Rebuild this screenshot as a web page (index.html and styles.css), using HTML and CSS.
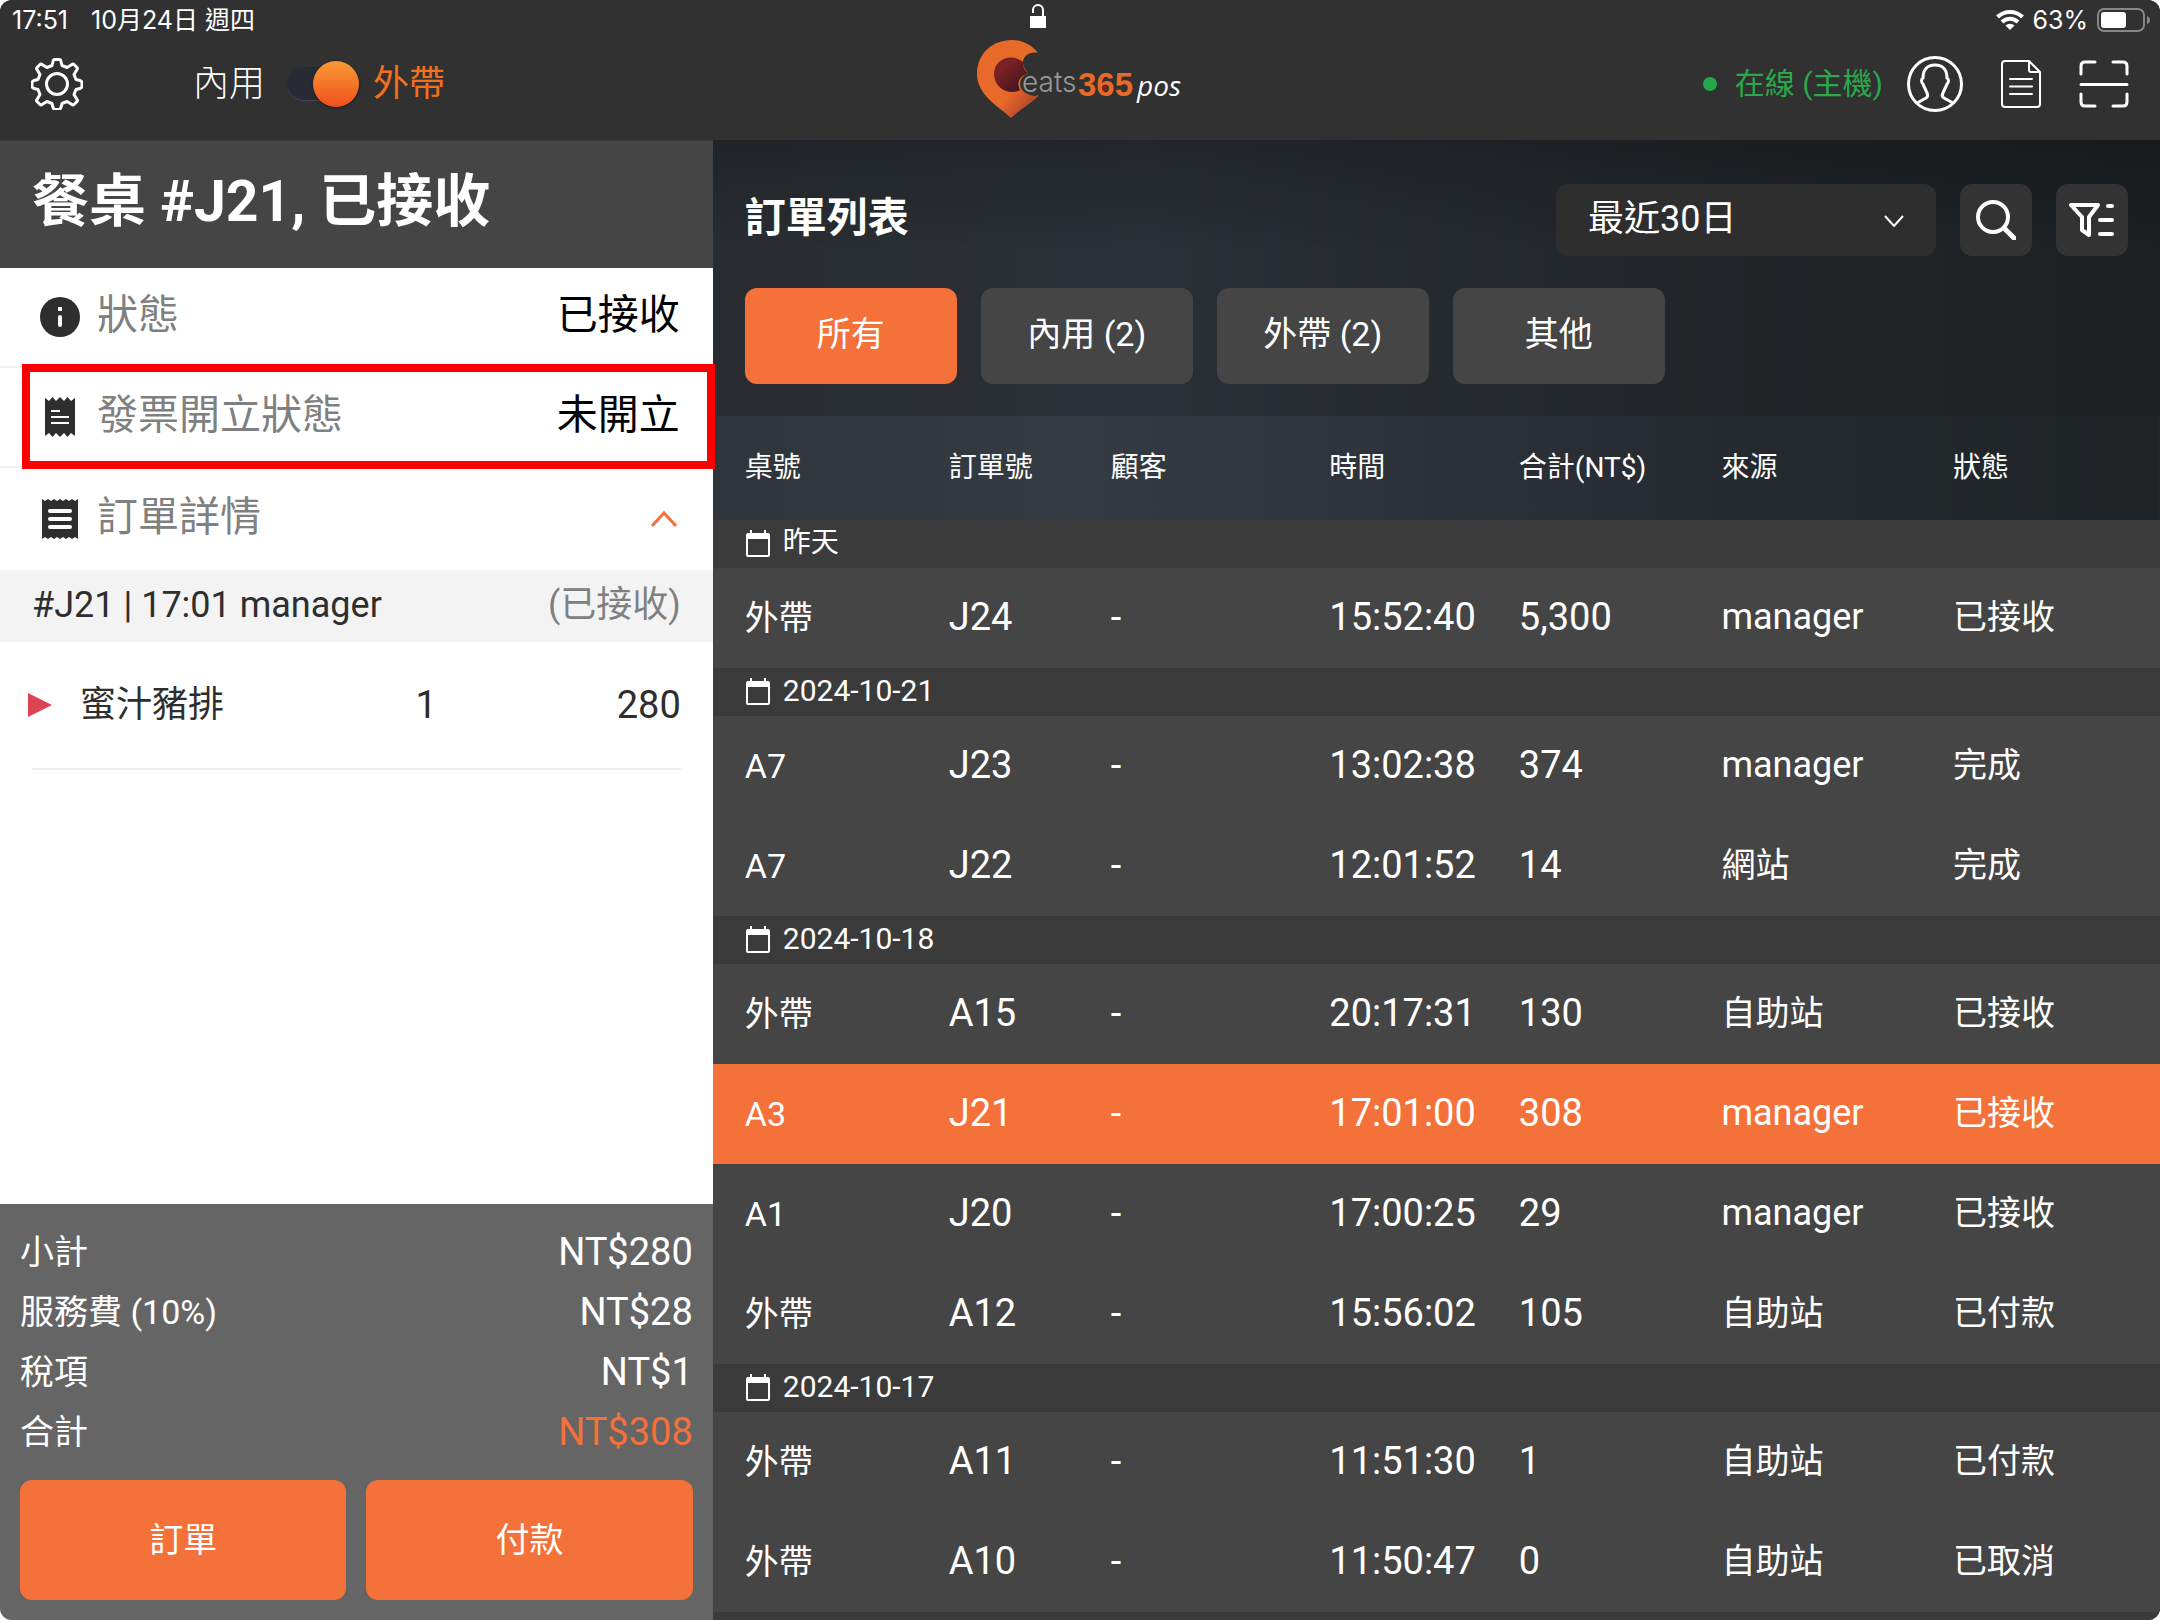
FILE: index.html
```html
<!DOCTYPE html>
<html lang="zh-Hant">
<head>
<meta charset="utf-8">
<meta name="viewport" content="width=device-width, initial-scale=1">
<title>Eats365 POS 訂單列表</title>
<link rel="stylesheet" href="styles.css">
</head>
<body>
<svg class="sprite" aria-hidden="true">
  <symbol id="calendar" viewBox="0 0 26 28">
    <path fill="#fff" fill-rule="evenodd" d="M5 0h2v3h12V0h2v3h2q2 0 2 2v20q0 2-2 2H3q-2 0-2-2V5q0-2 2-2h2zM3 9v16h20V9z"/>
  </symbol>
</svg>
<div class="app">
  <header class="topbar">
    <div class="statusbar">
      <div class="clock"><span>17:51</span><span>10月24日 週四</span></div>
      <svg class="lock" width="16" height="24" viewBox="0 0 16 24"><path d="M0 12h16v12H0z" fill="#fff"/><path d="M3 9V6a5 5 0 0 1 10 0v7" fill="none" stroke="#fff" stroke-width="2"/></svg>
      <div class="device">
        <svg width="28" height="22" viewBox="0 0 28 22" fill="none" stroke="#fff" stroke-width="4"><path d="M1.500 8a18 18 0 0 1 25 0"/><path d="M6 13a11.500 11.500 0 0 1 16 0"/><path d="M14 21l-4.500-4.500a6.500 6.500 0 0 1 9 0z" fill="#fff" stroke="none"/></svg>
        <span>63%</span>
        <svg width="53" height="24" viewBox="0 0 53 24"><rect x="1" y="1" width="46" height="22" rx="6" fill="none" stroke="#868686" stroke-width="2"/><rect x="4" y="4" width="25" height="16" rx="3" fill="#fff"/><path d="M50 8q3 1 3 4t-3 4z" fill="#868686"/></svg>
      </div>
    </div>
    <div class="toolbar">
      <div class="tools-left">
        <button class="icon-btn" aria-label="設定">
          <svg width="52" height="52" viewBox="0 0 52 52" fill="none" stroke="#fff" stroke-width="3" stroke-linejoin="round"><circle cx="26" cy="26" r="10.500"/><path d="M23.500 1.500h5q1 0 1.500 2l1 4 5 2 5-3q1-1 2 0l3 3q1 1 0 2l-3 5 2 5 4 1q2 1 2 2v4q0 1-2 2l-4 1-2 5 3 5q1 1 0 2l-3 3q-1 1-2 0l-5-3-5 2-1 4q-1 2-2 2h-4q-1 0-2-2l-1-4-5-2-5 3q-1 1-2 0l-3-3q-1-1 0-2l3-5-2-5-4-1q-2-1-2-2v-4q0-1 2-2l4-1 2-5-3-5q-1-1 0-2l3-3q1-1 2 0l5 3 5-2 1-4q.5-2 1.500-2z"/></svg>
        </button>
        <label class="mode">
          <span>內用</span>
          <input type="checkbox" class="switch" checked>
          <span class="mode-on">外帶</span>
        </label>
      </div>
      <svg class="logo" width="206" height="80" viewBox="0 0 206 80">
        <defs>
          <linearGradient id="pin" x1="0" y1="0" x2="1" y2="1"><stop offset=".6" stop-color="#e86a28"/><stop offset="1" stop-color="#93302b"/></linearGradient>
          <linearGradient id="core" x1="0" y1="0" x2="1" y2="1"><stop offset=".3" stop-color="#7b2123"/><stop offset=".8" stop-color="#451722"/></linearGradient>
        </defs>
        <path fill="url(#pin)" d="M34 78C24 68 0 56 0 34 0 14 15 0 35 0c11 0 20 5 26 13-9-2-16 4-15 11 1 4 3 7 5 9-10 4-13 20 6 23l5-1C57 62 43 69 34 78z"/>
        <path fill="url(#core)" d="M46 22c-13-10-29-2-29 12s15 22 26 16c-4-8 0-14 8-17-3-2-5-6-5-11z"/>
        <text x="45" y="52" class="logo-eats">eats</text>
        <text x="101" y="56" class="logo-365">365</text>
        <circle cx="128" cy="48" r="3" fill="#7b2123"/>
        <text x="160" y="56" class="logo-pos">pos</text>
      </svg>
      <div class="tools-right">
        <span class="online">在線 (主機)</span>
        <button class="icon-btn" aria-label="帳戶">
          <svg width="56" height="56" viewBox="0 0 56 56" fill="none" stroke="#fff" stroke-width="3"><circle cx="28" cy="28" r="26.500"/><path d="M10 47l9-5c2-1 2-3 1-5-1-3-3-6-4-9-2-2-2-5 0-6 0-8 4-13 12-13s12 5 12 13c2 1 2 4 0 6-1 3-3 6-4 9-1 2-1 4 1 5l9 5"/></svg>
        </button>
        <button class="icon-btn" aria-label="單據">
          <svg width="40" height="48" viewBox="0 0 40 48" fill="none" stroke="#fff" stroke-width="2" stroke-linejoin="round"><path d="M4 1h24l11 11v32q0 3-3 3H4q-3 0-3-3V4q0-3 3-3zM28 1v9q0 2 2 2h9"/><path d="M9 19h22M9 26.500h22M9 34h22" stroke-linecap="round"/></svg>
        </button>
        <button class="icon-btn" aria-label="掃描">
          <svg width="50" height="48" viewBox="0 0 50 48" fill="none" stroke="#fff" stroke-width="3" stroke-linecap="round"><path d="M2 14V6q0-4 4-4h10M34 2h10q4 0 4 4v8M48 34v8q0 4-4 4H34M16 46H6q-4 0-4-4v-8M2 24.500h46"/></svg>
        </button>
      </div>
    </div>
  </header>

  <main class="content">
    <section class="ticket">
      <h1 class="ticket-title">餐桌 #J21, 已接收</h1>
      <div class="info-row">
        <svg width="40" height="40" viewBox="0 0 40 40"><circle cx="20" cy="20" r="20" fill="#2e2e2e"/><path d="M18 10h4v4h-4z" fill="#fff"/><path d="M20 20v8" stroke="#fff" stroke-width="4" stroke-linecap="round"/></svg>
        <span class="info-label">狀態</span><span class="info-value">已接收</span>
      </div>
      <div class="info-row marked">
        <svg width="40" height="40" viewBox="0 0 40 40"><path fill="#2e2e2e" d="M5 1l4 3 3.500-4 3.500 4 4-4 4 4 3.500-4 3.500 4 4-3v38l-4-3-3.500 4-3.500-4-4 4-4-4-3.500 4L9 36l-4 3z"/><path d="M11 14h9M11 20h18M11 26h18" stroke="#fff" stroke-width="2"/></svg>
        <span class="info-label">發票開立狀態</span><span class="info-value">未開立</span>
      </div>
      <div class="info-row">
        <svg width="40" height="40" viewBox="0 0 40 40"><path fill="#2e2e2e" d="M2 0l3 2 3-2 3 2 3-2 3 2 3-2 3 2 3-2 3 2 3-2 3 2 3-2v40l-3-2-3 2-3-2-3 2-3-2-3 2-3-2-3 2-3-2-3 2-3-2-3 2z"/><path d="M10 12h20M10 20h20M10 28h20" stroke="#fff" stroke-width="4" stroke-linecap="round"/></svg>
        <span class="info-label">訂單詳情</span>
        <button class="icon-btn" aria-label="收合"><svg width="26" height="16" viewBox="0 0 26 16" fill="none" stroke="#f4713a" stroke-width="3"><path d="M1 15L13 2l12 13"/></svg></button>
      </div>
      <div class="batch"><span>#J21 | 17:01 manager</span><span class="muted">(已接收)</span></div>
      <div class="item">
        <svg width="24" height="24" viewBox="0 0 24 24"><path d="M0 0l24 12L0 24z" fill="#dc4455"/></svg>
        <span>蜜汁豬排</span><span class="qty">1</span><span class="price">280</span>
      </div>
      <div class="totals">
        <dl class="total-list">
          <div><dt>小計</dt><dd>NT$280</dd></div>
          <div><dt>服務費 (10%)</dt><dd>NT$28</dd></div>
          <div><dt>稅項</dt><dd>NT$1</dd></div>
          <div><dt>合計</dt><dd class="accent">NT$308</dd></div>
        </dl>
        <div class="actions"><button>訂單</button><button>付款</button></div>
      </div>
    </section>

    <section class="orders">
      <div class="orders-head">
        <div class="orders-bar">
          <h2>訂單列表</h2>
          <div class="select-wrap">
            <select aria-label="期間"><option>最近30日</option></select>
            <svg class="caret" width="20" height="12" viewBox="0 0 20 12" fill="none" stroke="#fff" stroke-width="2"><path d="M1 1l9 10 9-10"/></svg>
          </div>
          <button class="square" aria-label="搜尋"><svg width="40" height="40" viewBox="0 0 40 40" fill="none" stroke="#fff" stroke-width="4"><circle cx="17" cy="17" r="15"/><path d="M28 28l10 10" stroke-width="5" stroke-linecap="round"/></svg></button>
          <button class="square" aria-label="篩選"><svg width="46" height="36" viewBox="0 0 46 36" fill="none" stroke="#fff" stroke-width="4" stroke-linejoin="round" stroke-linecap="round"><path d="M2 3h27l-9 12v18l-7-5V15z"/><path d="M39 4h4M31 18h12M31 32h12"/></svg></button>
        </div>
        <div class="tabs">
          <button class="active">所有</button><button>內用 (2)</button><button>外帶 (2)</button><button>其他</button>
        </div>
      </div>
      <table>
        <colgroup><col class="c1"><col class="c2"><col class="c3"><col class="c4"><col class="c5"><col class="c6"><col class="c7"></colgroup>
        <thead><tr><th>桌號</th><th>訂單號</th><th>顧客</th><th>時間</th><th>合計(NT$)</th><th>來源</th><th>狀態</th></tr></thead>
        <tbody>
          <tr class="day"><th colspan="7"><div><svg width="26" height="28"><use href="#calendar"/></svg><span>昨天</span></div></th></tr>
          <tr><td>外帶</td><td class="num">J24</td><td class="num">-</td><td class="num">15:52:40</td><td class="num">5,300</td><td class="latin">manager</td><td>已接收</td></tr>
          <tr class="day"><th colspan="7"><div><svg width="26" height="28"><use href="#calendar"/></svg><span class="date">2024-10-21</span></div></th></tr>
          <tr><td>A7</td><td class="num">J23</td><td class="num">-</td><td class="num">13:02:38</td><td class="num">374</td><td class="latin">manager</td><td>完成</td></tr>
          <tr><td>A7</td><td class="num">J22</td><td class="num">-</td><td class="num">12:01:52</td><td class="num">14</td><td>網站</td><td>完成</td></tr>
          <tr class="day"><th colspan="7"><div><svg width="26" height="28"><use href="#calendar"/></svg><span class="date">2024-10-18</span></div></th></tr>
          <tr><td>外帶</td><td class="num">A15</td><td class="num">-</td><td class="num">20:17:31</td><td class="num">130</td><td>自助站</td><td>已接收</td></tr>
          <tr class="selected"><td>A3</td><td class="num">J21</td><td class="num">-</td><td class="num">17:01:00</td><td class="num">308</td><td class="latin">manager</td><td>已接收</td></tr>
          <tr><td>A1</td><td class="num">J20</td><td class="num">-</td><td class="num">17:00:25</td><td class="num">29</td><td class="latin">manager</td><td>已接收</td></tr>
          <tr><td>外帶</td><td class="num">A12</td><td class="num">-</td><td class="num">15:56:02</td><td class="num">105</td><td>自助站</td><td>已付款</td></tr>
          <tr class="day"><th colspan="7"><div><svg width="26" height="28"><use href="#calendar"/></svg><span class="date">2024-10-17</span></div></th></tr>
          <tr><td>外帶</td><td class="num">A11</td><td class="num">-</td><td class="num">11:51:30</td><td class="num">1</td><td>自助站</td><td>已付款</td></tr>
          <tr><td>外帶</td><td class="num">A10</td><td class="num">-</td><td class="num">11:50:47</td><td class="num">0</td><td>自助站</td><td>已取消</td></tr>
        </tbody>
      </table>
    </section>
  </main>
</div>
</body>
</html>
```
FILE: styles.css
```css
:root {
  --orange: #f4713a;
  --bar: #313131;
  --row: #454545;
  --day: #3b3b3b;
}
* { box-sizing: border-box; }
body {
  margin: 0;
  background: #fff;
  color: #fff;
  font: 400 34px/48px "Roboto", "Noto Sans CJK TC", sans-serif;
}
button, select, input { font: inherit; color: inherit; margin: 0; }
button { border: 0; padding: 0; background: none; cursor: pointer; }
svg { display: block; flex: none; }
.sprite { position: absolute; width: 0; height: 0; }

.app {
  display: flex;
  flex-direction: column;
  height: 100vh;
  overflow: hidden;
  border-radius: 12px;
  background: var(--day);
}

/* top bar */
.topbar { flex: none; background: var(--bar); }
.statusbar {
  display: grid;
  grid-template-columns: 1fr auto 1fr;
  height: 28px;
  padding: 0 10px 0 12px;
  font: 400 25px/40px "Inter", "Noto Sans CJK TC", sans-serif;
}
.clock { display: flex; gap: 23px; }
.lock { margin: 4px 86px 0 0; }
.device { display: flex; justify-content: flex-end; align-items: center; gap: 9px; height: 40px; }
.toolbar {
  display: grid;
  grid-template-columns: 1fr auto 1fr;
  align-items: center;
  height: 112px;
  padding: 0 31px;
}
.tools-left, .tools-right, .mode { display: flex; align-items: center; }
.mode { gap: 22px; margin-left: 110px; font-size: 36px; font-weight: 300; }
.mode-on { color: #f26f1c; margin-left: -8px; font-weight: 400; }
.switch {
  appearance: none;
  display: flex;
  align-items: center;
  justify-content: flex-end;
  width: 72px;
  height: 34px;
  border-radius: 17px;
  background: #282b35;
  border-bottom: 1px solid #464b55;
}
.switch::before {
  content: "";
  flex: none;
  width: 46px;
  height: 46px;
  border-radius: 50%;
  background: linear-gradient(#f99a35, #f0501b);
  box-shadow: 0 1px 3px #0008;
}
.logo { margin-bottom: 8px; }
.logo-eats { font: 300 28px "Inter", sans-serif; fill: #999; }
.logo-365 { font: bold 33px "Liberation Sans", sans-serif; fill: #e86a28; }
.logo-pos { font: italic 400 28px "Open Sans", sans-serif; fill: #fff; }
.tools-right { justify-content: flex-end; font-size: 30px; }
.tools-right .icon-btn { margin-left: 38px; }
.online { display: flex; align-items: center; gap: 18px; color: #2aa84c; }
.online::before { content: ""; width: 14px; height: 14px; border-radius: 50%; background: #24a84a; }
.online + .icon-btn { margin-left: 24px; }

.content { display: grid; grid-template-columns: 33% 1fr; flex: 1; min-height: 0; }

/* ticket */
.ticket { display: flex; flex-direction: column; min-height: 0; background: #fff; color: #2e2e2e; }
.ticket-title {
  margin: 0;
  height: 128px;
  padding: 0 32px;
  border-top: 1px solid #3b3b3b;
  background: var(--row);
  color: #fff;
  font-size: 57px;
  font-weight: 700;
  line-height: 122px;
}
.info-row {
  position: relative;
  display: flex;
  align-items: center;
  gap: 17px;
  height: 100px;
  padding: 0 33px 0 40px;
  border-bottom: 2px solid #f0f0f2;
  font-size: 41px;
}
.info-row:nth-of-type(3) { height: 102px; border: 0; }
.info-row span { padding-bottom: 4px; }
.info-row .icon-btn { margin-right: 3px; }
.info-label { flex: 1; color: #808080; }
.info-value { color: #000; }
.marked::after {
  content: "";
  position: absolute;
  inset: -4px -2px -3px 22px;
  border: 8px solid #f00;
}
.batch { display: flex; justify-content: space-between; height: 72px; padding: 0 32px; background: #f3f3f3; font-size: 36px; line-height: 70px; }
.muted { color: #808080; }
.item {
  display: grid;
  grid-template-columns: 20px 1fr auto 246px;
  align-items: center;
  column-gap: 28px;
  height: 128px;
  margin: 0 32px;
  border-bottom: 2px solid #ededf2;
  font-size: 36px;
}
.item { grid-template-columns: 20px 1fr auto 216px; }
.item svg { margin-left: -4px; }
.qty, .price { font-size: 38px; }
.price { text-align: right; }
.totals { margin-top: auto; padding: 18px 20px 20px; background: #656565; color: #fff; }
.total-list { margin: 0 0 18px; }
.total-list div { display: flex; justify-content: space-between; line-height: 60px; }
.total-list dd { margin: 0; font-size: 38px; }
.total-list .accent { color: var(--orange); }
.actions { display: grid; grid-template-columns: 1fr 1fr; gap: 20px; }
.actions button { height: 120px; border-radius: 12px; background: var(--orange); }

/* orders */
.orders { min-width: 0; overflow: hidden; background: var(--day); }
.orders-head {
  height: 276px;
  padding: 44px 32px 0;
  background: linear-gradient(#0003, #0000 40%), linear-gradient(90deg, #292d31, #2b3036 30%, #23272b 62%, #1d2022);
}
.orders-bar { display: flex; align-items: center; gap: 24px; }
.orders-bar h2 { flex: 1; margin: 0; padding-bottom: 4px; font-size: 41px; font-weight: 700; line-height: 64px; }
.select-wrap { position: relative; width: 380px; }
.select-wrap select { appearance: none; width: 100%; height: 72px; padding: 0 32px 2px; border: 0; border-radius: 12px; background: #2e2e2e; font-size: 36px; }
.caret { position: absolute; right: 32px; top: 31px; pointer-events: none; }
.square { display: grid; place-items: center; width: 72px; height: 72px; border-radius: 12px; background: #333; }
.tabs { display: flex; gap: 24px; margin-top: 32px; }
.tabs button { width: 212px; height: 96px; padding-bottom: 4px; border-radius: 12px; background: var(--row); }
.tabs .active { background: var(--orange); }

table { width: 100%; table-layout: fixed; border-collapse: collapse; }
.c1 { width: 16.3%; }
.c2 { width: 11.2%; }
.c3 { width: 15.1%; }
.c4 { width: 13.1%; }
.c5 { width: 14%; }
.c6 { width: 16%; }
th, td { padding: 0; text-align: left; font-weight: inherit; white-space: nowrap; }
th:first-child, td:first-child { padding-left: 32px; }
thead tr { height: 104px; font-size: 28px; background: linear-gradient(90deg, #2f353a, #343b42 25%, #2e333c 45%, #24292d 75%, #202427); }
tbody tr { height: 100px; background: var(--row); }
tbody td { padding-bottom: 2px; }
tbody td:first-child { padding-bottom: 0; }
.num { font-size: 38px; }
.latin { font-size: 36px; }
tbody .day { height: 48px; background: var(--day); font-size: 28px; }
.day div { display: flex; align-items: center; gap: 12px; height: 48px; }
.day span { padding-bottom: 2px; }
.date { font-size: 30px; }
tbody .selected { background: var(--orange); }
```
